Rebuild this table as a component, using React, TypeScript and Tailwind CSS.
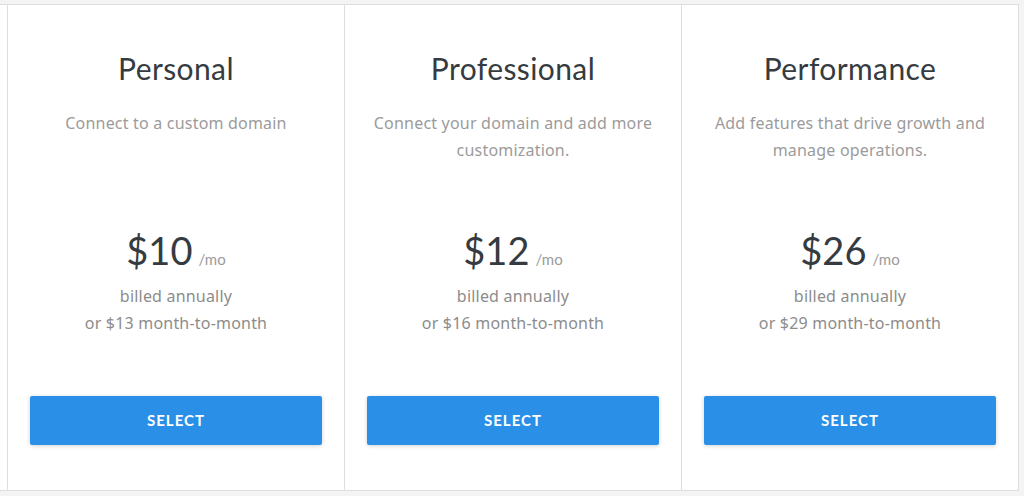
import React from "react";

const plans = [
  { name: "Personal", desc: ["Connect to a custom domain"], price: "$10", alt: "$13" },
  { name: "Professional", desc: ["Connect your domain and add more", "customization."], price: "$12", alt: "$16" },
  { name: "Performance", desc: ["Add features that drive growth and", "manage operations."], price: "$26", alt: "$29" },
];

export default function App() {
  return (
    <div
      className="w-[1024px] h-[496px] bg-[#f4f4f4] pt-[4px] overflow-hidden"
      style={{ fontFamily: "Lato, 'Noto Sans', sans-serif" }}
    >
      <div className="w-[1019px] h-[487px] bg-white border-t border-r border-b border-[#dedede] pl-[7px] flex">
        {plans.map((p) => (
          <div key={p.name} className="w-[337px] h-full border-l border-[#dedede] flex flex-col items-center pt-[45px]">
            <h2 className="text-[30px] leading-[36px] h-[36px] text-[#353b40] tracking-[0.4px]">{p.name}</h2>
            <div
              className="mt-[24px] h-[54px] text-[16px] leading-[27px] text-[#9b9b9b] text-center tracking-[0.2px] whitespace-nowrap"
              style={{ fontFamily: "'Noto Sans', sans-serif" }}
            >
              {p.desc.map((d) => (
                <div key={d}>{d}</div>
              ))}
            </div>
            <div className="mt-[62px] h-[48px] flex items-baseline">
              <span className="text-[38px] leading-[48px] text-[#353b40]">{p.price}</span>
              <span className="ml-[6px] text-[15px] text-[#9b9b9b]">/mo</span>
            </div>
            <div
              className="mt-[9px] text-[16px] leading-[27px] text-[#8c8c8c] text-center tracking-[0.2px]"
              style={{ fontFamily: "'Noto Sans', sans-serif" }}
            >
              <div>billed annually</div>
              <div>or {p.alt} month-to-month</div>
            </div>
            <button className="mt-[59px] w-[292px] h-[49px] bg-[#2a8fe6] rounded-[2px] shadow-[0_1px_4px_rgba(0,0,0,0.18)] text-white text-[15px] font-bold tracking-[1px]">
              SELECT
            </button>
          </div>
        ))}
      </div>
    </div>
  );
}
